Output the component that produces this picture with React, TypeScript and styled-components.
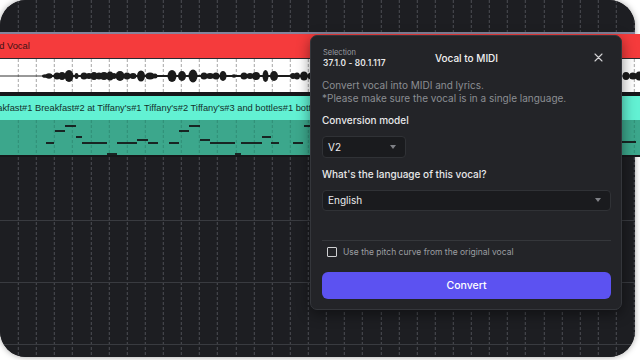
import React from "react";
import styled, { createGlobalStyle } from "styled-components";

const BG = "#1d1e22";
const DIALOG = "#232428";

const GlobalStyle = createGlobalStyle`
  html, body { margin: 0; padding: 0; background: #ffffff; }
  body { width: 640px; height: 360px; overflow: hidden; font-family: Inter, "Noto Sans", sans-serif; }
  * { box-sizing: border-box; }
`;

const Stage = styled.div`
  width: 640px;
  height: 360px;
  background: #ffffff;
`;

const Window = styled.div`
  position: relative;
  width: 635px;
  height: 357px;
  display: flex;
  flex-direction: column;
  border-radius: 26px;
  background: ${BG};
  box-shadow: 0 0 6px rgba(0, 0, 0, 0.35);
`;

const darkGrid = (line: string, bg: string) => `
  repeating-linear-gradient(to bottom, transparent 0 3px, ${bg} 3px 5px),
  repeating-linear-gradient(to right, transparent 0 17.12px, ${line} 17.12px 18.12px)
`;

const Ruler = styled.div`
  height: 32px;
  flex: none;
  border-radius: 26px 26px 0 0;
  background: ${darkGrid("#4b4d53", BG)};
  background-color: ${BG};
  background-position: 0 0, 0.8px 0;
`;

const RulerEdge = styled.div`
  height: 2px;
  flex: none;
  background: #85849c;
`;

const TrackRow = styled.div<{ $h: number; $bg: string }>`
  position: relative;
  width: calc(100% + 5px);
  height: ${(p) => p.$h}px;
  flex: none;
  background: ${(p) => p.$bg};
  overflow: hidden;
`;

const Sep = styled.div<{ $h: number; $c: string }>`
  width: calc(100% + 5px);
  height: ${(p) => p.$h}px;
  flex: none;
  background: ${(p) => p.$c};
`;

const RowLabel = styled.div<{ $indent: number; $color: string }>`
  padding-top: 6px;
  white-space: nowrap;
  font-family: "Liberation Sans", Arial, sans-serif;
  font-size: 9.3px;
  line-height: 13px;
  color: ${(p) => p.$color};
  text-indent: ${(p) => p.$indent}px;
`;

const WaveArea = styled(TrackRow)`
  background:
    repeating-linear-gradient(to bottom, transparent 0 3px, #ffffff 3px 5px),
    repeating-linear-gradient(to right, transparent 0 17.12px, #a6a6a6 17.12px 18.12px);
  background-color: #ffffff;
  background-position: 0 0, 0.8px 0;
`;

const MidiArea = styled(TrackRow)`
  background:
    repeating-linear-gradient(to bottom, transparent 0 3px, #3ca78c 3px 5px),
    repeating-linear-gradient(to right, transparent 0 17.12px, #2f8d75 17.12px 18.12px);
  background-color: #3ca78c;
  background-position: 0 0, 0.8px 0;
`;

const Drawing = styled.svg`
  position: absolute;
  left: 0;
  top: 0;
  display: block;
`;

const BottomGrid = styled.div`
  flex: 1;
  border-radius: 0 0 26px 26px;
  background:
    repeating-linear-gradient(to bottom, transparent 0 61px, #393b40 61px 62px),
    ${darkGrid("#4b4d53", BG)};
  background-color: ${BG};
  background-position: 0 2px, 0 0, 0.8px 0;
`;

/* ---------- dialog ---------- */

const Dialog = styled.div`
  position: absolute;
  left: 310px;
  top: 35px;
  width: 312px;
  height: 275px;
  padding: 10px 10px 10px 11px;
  display: flex;
  flex-direction: column;
  background: ${DIALOG};
  border: 1px solid #34363b;
  border-radius: 7px;
  box-shadow: 0 4px 14px rgba(0, 0, 0, 0.45);
`;

const Header = styled.div`
  display: grid;
  grid-template-columns: 1fr auto 1fr;
  align-items: center;
  height: 24px;
`;

const SelectionBlock = styled.div`
  display: flex;
  flex-direction: column;
  gap: 0.5px;
  padding-left: 1px;
`;

const SelCaption = styled.span`
  font-size: 7.5px;
  line-height: 9.5px;
  color: #9b9da2;
`;

const SelValue = styled.span`
  font-size: 8.3px;
  line-height: 10px;
  font-weight: 600;
  letter-spacing: 0.15px;
  color: #e9e9ea;
`;

const Title = styled.div`
  font-size: 10px;
  font-weight: 500;
  color: #f1f1f2;
`;

const CloseBtn = styled.button`
  justify-self: end;
  margin-right: 7px;
  width: 12px;
  height: 12px;
  padding: 0;
  border: none;
  background: none;
  display: grid;
  place-items: center;
  color: #d4d4d6;
`;

const Desc = styled.p`
  margin: 10px 0 0;
  font-size: 10px;
  line-height: 12.5px;
  color: #8b8e93;
`;

const FieldLabel = styled.div`
  margin-top: 10px;
  font-size: 10px;
  line-height: 13px;
  font-weight: 500;
  color: #e8e8ea;
`;

const Select = styled.div<{ $w?: number }>`
  margin-top: 9px;
  width: ${(p) => (p.$w ? `${p.$w}px` : "100%")};
  height: 22px;
  padding: 0 9px 0 5px;
  display: flex;
  align-items: center;
  justify-content: space-between;
  background: #1a1b1e;
  border: 1px solid #303236;
  border-radius: 4px;
  font-size: 10px;
  color: #ececed;
`;

const Caret = styled.span`
  width: 0;
  height: 0;
  border-left: 3px solid transparent;
  border-right: 3px solid transparent;
  border-top: 4px solid #7f8186;
`;

const Divider = styled.div`
  margin-top: 29px;
  height: 1px;
  background: #35373b;
`;

const CheckRow = styled.label`
  margin-top: 5px;
  display: flex;
  align-items: center;
  gap: 6px;
  height: 12px;
  padding-left: 5px;
  font-size: 8.5px;
  color: #9c9ea2;
`;

const Box = styled.span`
  width: 10px;
  height: 10px;
  border: 1.3px solid #cfd0d2;
  border-radius: 1px;
`;

const ConvertButton = styled.button`
  margin-top: 14px;
  height: 28px;
  width: 100%;
  border: none;
  border-radius: 6px;
  background: #5c52f1;
  color: #ffffff;
  font-family: inherit;
  font-size: 10.5px;
  font-weight: 500;
`;

/* ---------- drawings ---------- */

const blobs: [number, number, number][] = [
  [45, 3, 1.8], [49, 3.5, 2.8], [57, 3.5, 3.5], [62, 3.5, 4], [69, 4.5, 6], [76.5, 2, 3],
  [84, 3.5, 3.5], [89, 3.5, 3], [94, 3.5, 4], [99, 3.5, 3.5], [104, 4, 4],
  [110, 3.5, 4.5], [114, 2.5, 3], [120, 4.5, 5], [127, 3.5, 3.5], [133, 3.5, 3],
  [141, 4, 5.5], [150, 4.5, 3.5], [155, 2.5, 2.5], [172, 4.5, 6], [182, 4, 5],
  [193, 4.5, 6.5], [204, 3.5, 3.5], [210, 4, 3], [216, 3.5, 3.5], [223, 3.5, 5],
  [234, 2.5, 1.8], [244, 3.5, 3.5], [250, 3.5, 3], [256, 4, 4], [265.5, 3, 6],
  [274, 4, 5], [293, 3, 3], [297, 3, 3.5], [304, 4, 4.5], [311, 3.5, 3.5],
  [626, 3.5, 4], [633, 4, 3.5], [639, 3.5, 4.5],
];

const notes: [number, number, number][] = [
  [46, 54, 23], [55, 65, 11], [65, 76, 6], [76, 82, 17], [82, 107, 23],
  [107, 117, 34], [117, 137, 23], [137, 148, 20], [148, 158, 23], [169, 179, 23],
  [179, 189, 11], [189, 200, 6], [200, 210, 20], [210, 235, 23], [235, 241, 34],
  [241, 262, 23], [262, 271, 17], [271, 279, 23], [293, 303, 23], [304, 312, 6],
  [622, 636, 22],
];

const Waveform = () => (
  <Drawing width="640" height="33" viewBox="0 0 640 33">
    <line x1="0" y1="17" x2="640" y2="17" stroke="#1b1b1b" strokeWidth="0.9" />
    <line x1="44" y1="17" x2="312" y2="17" stroke="#1b1b1b" strokeWidth="2" />
    {blobs.map(([cx, rx, ry], i) => (
      <ellipse key={i} cx={cx} cy={17} rx={rx} ry={ry} fill="#1b1b1b" />
    ))}
  </Drawing>
);

const MidiNotes = () => (
  <Drawing width="640" height="35" viewBox="0 0 640 35">
    {notes.map(([x1, x2, y], i) => (
      <rect key={i} x={x1} y={y - 0.9} width={x2 - x1} height={1.8} fill="#151818" />
    ))}
  </Drawing>
);

export default function App() {
  return (
    <Stage>
      <GlobalStyle />
      <Window>
        <Ruler />
        <RulerEdge />
        <TrackRow $h={24} $bg="#f53b3c">
          <RowLabel $indent={-16.3} $color="#3b1214">Lead Vocal</RowLabel>
        </TrackRow>
        <Sep $h={1} $c="#2a2b2f" />
        <WaveArea $h={33} $bg="#ffffff">
          <Waveform />
        </WaveArea>
        <Sep $h={4} $c="#16171a" />
        <TrackRow $h={24} $bg="#62f1d3">
          <RowLabel $indent={-17.2} $color="#14302b">
            Breakfast#1 Breakfast#2 at Tiffany's#1 Tiffany's#2 Tiffany's#3 and bottles#1 bottles#2
          </RowLabel>
        </TrackRow>
        <MidiArea $h={35} $bg="#3ca78c">
          <MidiNotes />
        </MidiArea>
        <Sep $h={2} $c="#16171a" />
        <BottomGrid />

        <Dialog>
          <Header>
            <SelectionBlock>
              <SelCaption>Selection</SelCaption>
              <SelValue>37.1.0 - 80.1.117</SelValue>
            </SelectionBlock>
            <Title>Vocal to MIDI</Title>
            <CloseBtn aria-label="Close">
              <svg width="9" height="9" viewBox="0 0 9 9">
                <path d="M1 1 L8 8 M8 1 L1 8" stroke="currentColor" strokeWidth="1.1" strokeLinecap="round" />
              </svg>
            </CloseBtn>
          </Header>
          <Desc>
            Convert vocal into MIDI and lyrics.
            <br />
            *Please make sure the vocal is in a single language.
          </Desc>
          <FieldLabel>Conversion model</FieldLabel>
          <Select $w={84}>
            <span>V2</span>
            <Caret />
          </Select>
          <FieldLabel>What's the language of this vocal?</FieldLabel>
          <Select>
            <span>English</span>
            <Caret />
          </Select>
          <Divider />
          <CheckRow>
            <Box />
            <span>Use the pitch curve from the original vocal</span>
          </CheckRow>
          <ConvertButton>Convert</ConvertButton>
        </Dialog>
      </Window>
    </Stage>
  );
}
